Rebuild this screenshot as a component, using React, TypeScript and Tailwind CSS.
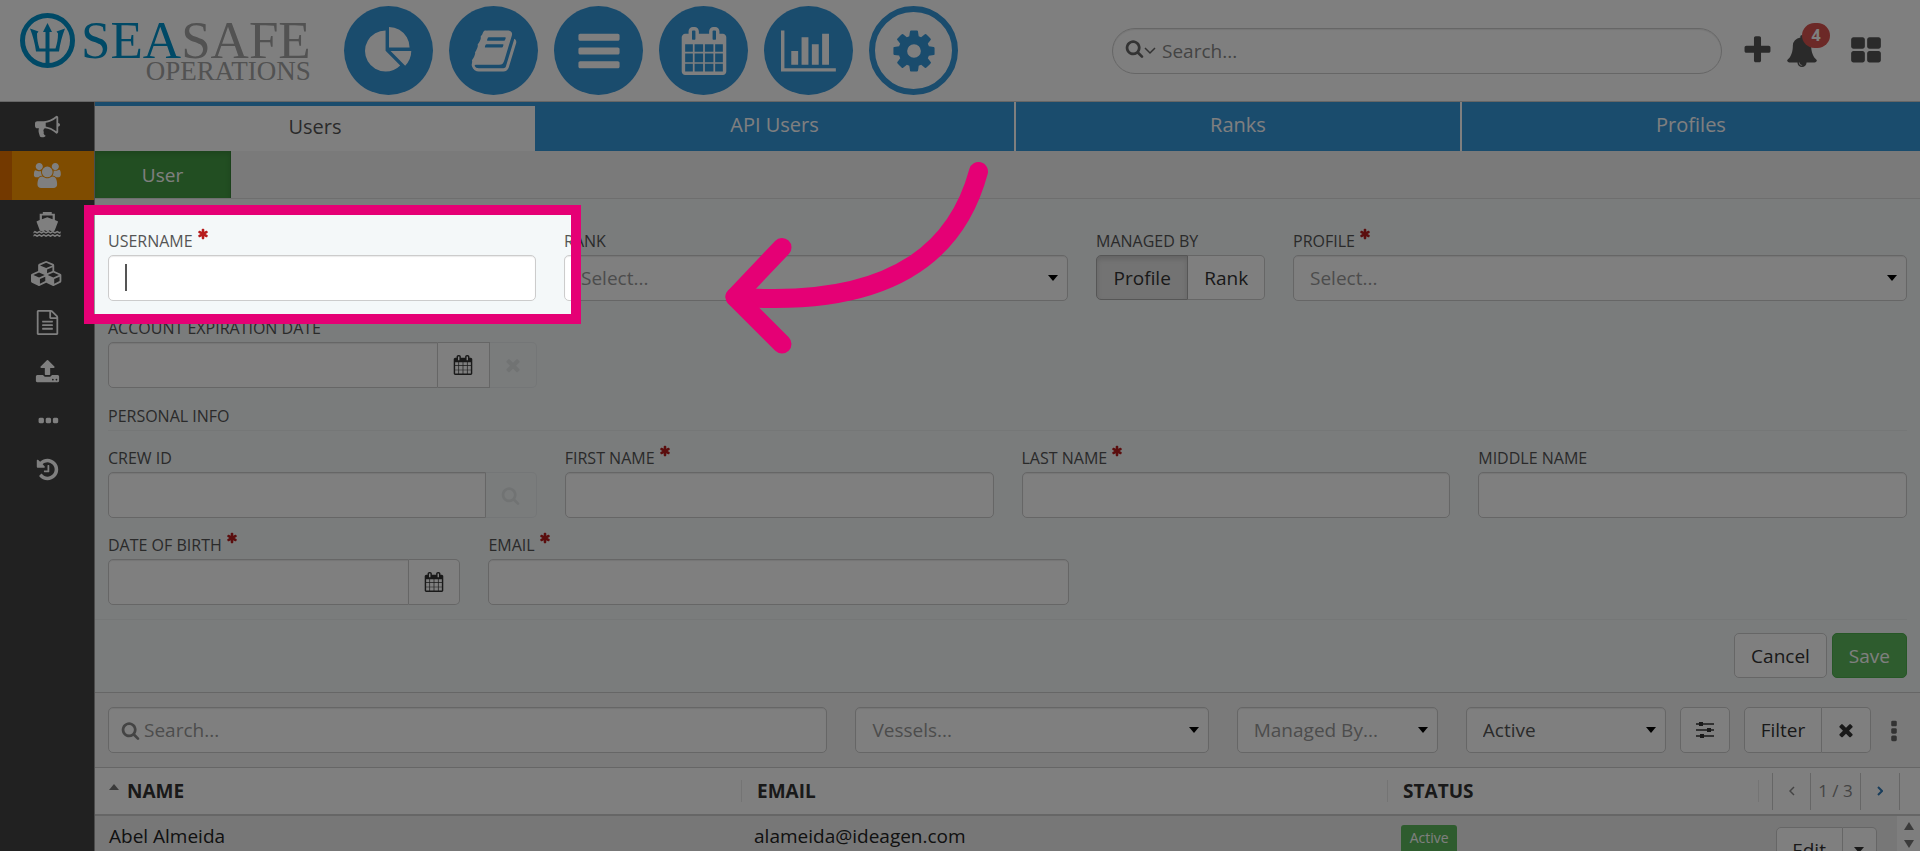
import type { ReactNode } from "react";

const icons = {
    asterisk: [1792, "M1546 1050q46 26 59.500 77.500t-12.500 97.500l-64 110q-26 46-77.500 59.500t-97.500-12.500l-266-153v307q0 52-38 90t-90 38h-128q-52 0-90-38t-38-90v-307l-266 153q-46 26-97.500 12.500t-77.500-59.500l-64-110q-26-46-12.500-97.500t59.500-77.500l266-154-266-154q-46-26-59.500-77.500t12.500-97.500l64-110q26-46 77.500-59.500t97.500 12.500l266 153v-307q0-52 38-90t90-38h128q52 0 90 38t38 90v307l266-153q46-26 97.500-12.500t77.500 59.500l64 110q26 46 12.500 97.500t-59.500 77.500l-266 154z"],
    pie: [1792, "M768 890l546 546q-106 108-247.5 168t-298.5 60q-209 0-385.5-103t-279.5-279.5-103-385.5 103-385.5 279.5-279.5 385.5-103v762zm187 6h773q0 157-60 298.5t-168 247.5zm709-128h-768v-768q209 0 385.5 103t279.5 279.5 103 385.5z"],
    book: [1792, "M1703 478q40 57 18 129l-275 906q-19 64-76.5 107.5t-122.5 43.5h-923q-77 0-148.5-53.5t-99.5-131.5q-24-67-2-127 0-4 3-27t4-37q1-8-3-21.5t-3-19.5q2-11 8-21t16.5-23.5 16.5-23.5q23-38 45-91.5t30-91.5q3-10 .5-30t-.5-28q3-11 17-28t17-23q21-36 42-92t25-90q1-9-2.5-32t.5-28q4-13 22-30.5t22-22.5q19-26 42.5-84.5t27.5-96.5q1-8-3-25.5t-2-26.5q2-8 9-18t18-23 17-21q8-12 16.5-30.5t15-35 16-36 19.5-32 26.5-23.5 36-11.5 47.5 5.5l-1 3q38-9 51-9h761q74 0 114 56t18 130l-274 906q-36 119-71.5 153.5t-128.5 34.5h-869q-27 0-38 15-11 16-1 43 24 70 144 70h923q29 0 56-15.5t35-41.5l300-987q7-22 5-57 38 15 59 43zm-1064 2q-4 13 2 22.5t20 9.5h608q13 0 25.5-9.5t16.5-22.5l21-64q4-13-2-22.5t-20-9.5h-608q-13 0-25.5 9.5t-16.5 22.5zm-83 256q-4 13 2 22.5t20 9.5h608q13 0 25.5-9.5t16.5-22.5l21-64q4-13-2-22.5t-20-9.5h-608q-13 0-25.5 9.5t-16.5 22.5z"],
    bars: [1792, "M1664 1344v128q0 26-19 45t-45 19h-1408q-26 0-45-19t-19-45v-128q0-26 19-45t45-19h1408q26 0 45 19t19 45zm0-512v128q0 26-19 45t-45 19h-1408q-26 0-45-19t-19-45v-128q0-26 19-45t45-19h1408q26 0 45 19t19 45zm0-512v128q0 26-19 45t-45 19h-1408q-26 0-45-19t-19-45v-128q0-26 19-45t45-19h1408q26 0 45 19t19 45z"],
    calendar: [1792, "M192 1664h288v-288h-288v288zm352 0h320v-288h-320v288zm-352-352h288v-320h-288v320zm352 0h320v-320h-320v320zm-352-384h288v-288h-288v288zm736 736h320v-288h-320v288zm-384-736h320v-288h-320v288zm768 736h288v-288h-288v288zm-384-352h320v-320h-320v320zm-352-864v-288q0-13-9.5-22.5t-22.5-9.5h-64q-13 0-22.5 9.5t-9.5 22.5v288q0 13 9.5 22.5t22.5 9.5h64q13 0 22.5-9.5t9.5-22.5zm736 864h288v-320h-288v320zm-384-384h320v-288h-320v288zm384 0h288v-288h-288v288zm32-480v-288q0-13-9.5-22.5t-22.5-9.5h-64q-13 0-22.5 9.5t-9.5 22.5v288q0 13 9.5 22.5t22.5 9.5h64q13 0 22.5-9.5t9.5-22.5zm384-64v1280q0 52-38 90t-90 38h-1408q-52 0-90-38t-38-90v-1280q0-52 38-90t90-38h128v-96q0-66 47-113t113-47h64q66 0 113 47t47 113v96h384v-96q0-66 47-113t113-47h64q66 0 113 47t47 113v96h128q52 0 90 38t38 90z"],
    chart: [2048, "M640 896v512h-256v-512h256zm384-512v1024h-256v-1024h256zm1024 1152v128h-2048v-1536h128v1408h1920zm-640-896v768h-256v-768h256zm384-384v1152h-256v-1152h256z"],
    cog: [1792, "M1152 896q0-106-75-181t-181-75-181 75-75 181 75 181 181 75 181-75 75-181zm512-109v222q0 12-8 23t-20 13l-185 28q-19 54-39 91 35 50 107 138 10 12 10 25t-9 23q-27 37-99 108t-94 71q-12 0-26-9l-138-108q-44 23-91 38-16 136-29 186-7 28-36 28h-222q-14 0-24.5-8.5t-11.5-21.5l-28-184q-49-16-90-37l-141 107q-10 9-25 9-14 0-25-11-126-114-165-168-7-10-7-23 0-12 8-23 15-21 51-66.5t54-70.5q-27-50-41-99l-183-27q-13-2-21-12.5t-8-23.5v-222q0-12 8-23t19-13l186-28q14-46 39-92-40-57-107-138-10-12-10-24 0-10 9-23 26-36 98.5-107.5t94.5-71.5q13 0 26 10l138 107q44-23 91-38 16-136 29-186 7-28 36-28h222q14 0 24.5 8.5t11.5 21.5l28 184q49 16 90 37l142-107q9-9 24-9 13 0 25 10 129 119 165 170 7 8 7 22 0 12-8 23-15 21-51 66.5t-54 70.5q26 50 41 98l183 28q13 2 21 12.5t8 23.5z"],
    search: [1792, "M1216 832q0-185-131.5-316.5t-316.5-131.5-316.5 131.5-131.5 316.5 131.5 316.5 316.5 131.5 316.5-131.5 131.5-316.5zm512 832q0 52-38 90t-90 38q-54 0-90-38l-343-342q-179 124-399 124-143 0-273.5-55.5t-225-150-150-225-55.5-273.5 55.5-273.5 150-225 225-150 273.5-55.5 273.5 55.5 225 150 150 225 55.5 273.5q0 220-124 399l343 343q37 37 37 90z"],
    plus: [1792, "M1600 736v192q0 40-28 68t-68 28h-416v416q0 40-28 68t-68 28h-192q-40 0-68-28t-28-68v-416h-416q-40 0-68-28t-28-68v-192q0-40 28-68t68-28h416v-416q0-40 28-68t68-28h192q40 0 68 28t28 68v416h416q40 0 68 28t28 68z"],
    bell: [1792, "M912 1696q0-16-16-16-59 0-101.5-42.5t-42.5-101.5q0-16-16-16t-16 16q0 73 51.5 124.5t124.5 51.5q16 0 16-16zm816-288q0 52-38 90t-90 38h-448q0 106-75 181t-181 75-181-75-75-181h-448q-52 0-90-38t-38-90q50-42 91-88t85-119.5 74.5-158.5 50-206 19.5-260q0-152 117-282.5t307-158.5q-8-19-8-39 0-40 28-68t68-28 68 28 28 68q0 20-8 39 190 28 307 158.5t117 282.5q0 139 19.5 260t50 206 74.5 158.5 85 119.5 91 88z"],
    grid: [1792, "M832 1024v384q0 52-38 90t-90 38h-512q-52 0-90-38t-38-90v-384q0-52 38-90t90-38h512q52 0 90 38t38 90zm0-768v384q0 52-38 90t-90 38h-512q-52 0-90-38t-38-90v-384q0-52 38-90t90-38h512q52 0 90 38t38 90zm896 768v384q0 52-38 90t-90 38h-512q-52 0-90-38t-38-90v-384q0-52 38-90t90-38h512q52 0 90 38t38 90zm0-768v384q0 52-38 90t-90 38h-512q-52 0-90-38t-38-90v-384q0-52 38-90t90-38h512q52 0 90 38t38 90z"],
    times: [1792, "M1490 1322q0 40-28 68l-136 136q-28 28-68 28t-68-28l-294-294-294 294q-28 28-68 28t-68-28l-136-136q-28-28-28-68t28-68l294-294-294-294q-28-28-28-68t28-68l136-136q28-28 68-28t68 28l294 294 294-294q28-28 68-28t68 28l136 136q28 28 28 68t-28 68l-294 294 294 294q28 28 28 68z"],
    bullhorn: [1792, "M1664 640q53 0 90.5 37.5t37.5 90.5-37.5 90.5-90.5 37.5v384q0 52-38 90t-90 38q-417-347-812-380-58 19-91 66t-31 100.5 40 92.5q-20 33-23 65.5t6 58 33.5 55 48 50 61.5 50.5q-29 58-111.5 83t-168.5 11.5-132-55.5q-7-23-29.5-87.5t-32-94.5-23-89-15-101 3.5-98.5 22-110.5h-122q-66 0-113-47t-47-113v-192q0-66 47-113t113-47h480q435 0 896-384 52 0 90 38t38 90v384zm-128 604v-954q-394 302-768 343v270q377 42 768 341z"],
    users: [2048, "M657 896q-162 5-265 128h-134q-82 0-138-40.5t-56-118.5q0-353 124-353 6 0 43.5 21t97.5 42.5 119 21.5q67 0 133-23-5 37-5 66 0 159 92 293zm1071 637q0 120-73 189.5t-194 69.5h-874q-121 0-194-69.5t-73-189.5q0-53 3.5-103.5t14-109 26.5-108.5 43-97.5 62-81 85.5-53.5 111.5-20q10 0 43 21.5t73 48 107 48 135 21.5 135-21.5 107-48 73-48 43-21.5q61 0 111.5 20t85.5 53.5 62 81 43 97.5 26.5 108.5 14 109 3.5 103.5zm-1024-1277q0 106-75 181t-181 75-181-75-75-181 75-181 181-75 181 75 75 181zm704 384q0 159-112.5 271.5t-271.5 112.5-271.5-112.5-112.5-271.5 112.5-271.5 271.5-112.5 271.5 112.5 112.5 271.5zm576 225q0 78-56 118.5t-138 40.5h-134q-103-123-265-128 92-134 92-293 0-29-5-66 66 23 133 23 59 0 119-21.5t97.5-42.5 43.5-21q124 0 124 353zm-128-609q0 106-75 181t-181 75-181-75-75-181 75-181 181-75 181 75 75 181z"],
    ship: [2048, "M704 0h640v128h224v448l200 80q40 20 20 64l-230 600q-90 60-180 60t-190-70q-80 70-164 70t-164-70q-100 70-190 70t-180-60l-230-600q-20-44 20-64l200-80v-448h224zm-64 256v270l384-154 384 154v-270zm-606 1170l100-80 160 90 160-90 160 90 160-90 160 90 160-90 160 90 160-90 160 90 160-90 160 90 90-50v130l-90 50-160-90-160 90-160-90-160 90-160-90-160 90-160-90-160 90-160-90-160 90-160-90-100 70zm0 230l100-80 160 90 160-90 160 90 160-90 160 90 160-90 160 90 160-90 160 90 160-90 160 90 90-50v130l-90 50-160-90-160 90-160-90-160 90-160-90-160 90-160-90-160 90-160-90-160 90-160-90-100 70z"],
    cubes: [2304, "M640 1632l384-192v-314l-384 164v342zm-64-454l404-173-404-173-404 173zm1088 454l384-192v-314l-384 164v342zm-64-454l404-173-404-173-404 173zm-448-293l384-165v-266l-384 164v267zm-64-379l441-189-441-189-441 189zm1088 518v416q0 36-19 67t-52 47l-448 224q-25 14-57 14t-57-14l-448-224q-4-2-7-4-2 2-7 4l-448 224q-25 14-57 14t-57-14l-448-224q-33-16-52-47t-19-67v-416q0-38 21.5-70t56.5-48l434-186v-400q0-38 21.5-70t56.5-48l448-192q23-10 50-10t50 10l448 192q35 16 56.5 48t21.5 70v400l434 186q36 16 57 48t21 70z"],
    file: [1792, "M1596 380q28 28 48 76t20 88v1152q0 40-28 68t-68 28h-1344q-40 0-68-28t-28-68v-1600q0-40 28-68t68-28h896q40 0 88 20t76 48zm-444-244v376h376q-10-29-22-41l-313-313q-12-12-41-22zm384 1528v-1024h-416q-40 0-68-28t-28-68v-416h-768v1536h1280zm-1024-864q0-14 9-23t23-9h704q14 0 23 9t9 23v64q0 14-9 23t-23 9h-704q-14 0-23-9t-9-23v-64zm736 224q14 0 23 9t9 23v64q0 14-9 23t-23 9h-704q-14 0-23-9t-9-23v-64q0-14 9-23t23-9h704zm0 256q14 0 23 9t9 23v64q0 14-9 23t-23 9h-704q-14 0-23-9t-9-23v-64q0-14 9-23t23-9h704z"],
    upload: [1792, "M1344 1472q0-26-19-45t-45-19-45 19-19 45 19 45 45 19 45-19 19-45zm256 0q0-26-19-45t-45-19-45 19-19 45 19 45 45 19 45-19 19-45zm128-224v320q0 40-28 68t-68 28h-1472q-40 0-68-28t-28-68v-320q0-40 28-68t68-28h427q21 56 70.5 92t110.5 36h256q61 0 110.5-36t70.5-92h427q40 0 68 28t28 68zm-325-648q-17 40-59 40h-256v448q0 26-19 45t-45 19h-256q-26 0-45-19t-19-45v-448h-256q-42 0-59-40-17-39 14-69l448-448q18-19 45-19t45 19l448 448q31 30 14 69z"],
    dots: [1792, "M640 800v192q0 40-28 68t-68 28h-192q-40 0-68-28t-28-68v-192q0-40 28-68t68-28h192q40 0 68 28t28 68zm512 0v192q0 40-28 68t-68 28h-192q-40 0-68-28t-28-68v-192q0-40 28-68t68-28h192q40 0 68 28t28 68zm512 0v192q0 40-28 68t-68 28h-192q-40 0-68-28t-28-68v-192q0-40 28-68t68-28h192q40 0 68 28t28 68z"],
    history: [1792, "M1664 896q0 156-61 298t-164 245-245 164-298 61q-172 0-327-72.5t-264-204.5q-7-10-6.5-22.5t8.5-20.5l137-138q10-9 25-9 16 2 23 12 73 95 179 147t225 52q104 0 198.5-40.5t163.5-109.5 109.5-163.5 40.5-198.5-40.5-198.5-109.5-163.5-163.5-109.5-198.5-40.5q-98 0-188 35.5t-160 101.5l137 138q31 30 14 69-17 40-59 40h-448q-26 0-45-19t-19-45v-448q0-42 40-59 39-17 69 14l130 129q107-101 244.5-156.5t284.5-55.5q156 0 298 61t245 164 164 245 61 298zm-640-288v448q0 14-9 23t-23 9h-320q-14 0-23-9t-9-23v-64q0-14 9-23t23-9h224v-352q0-14 9-23t23-9h64q14 0 23 9t9 23z"],
} as const;

type IconName = keyof typeof icons;

function Icon({ name, className }: { name: IconName; className: string }) {
    const [width, path] = icons[name];
    return (
        <svg viewBox={`0 0 ${width} 1792`} className={`shrink-0 fill-current ${className}`} aria-hidden="true">
            <path d={path} />
        </svg>
    );
}

const control = "w-full min-w-0 h-[46px] px-4 bg-white border border-[#ccc] rounded-[5px] shadow-[inset_0_1px_1px_rgba(0,0,0,0.08)] outline-none placeholder:text-[#999]";
const button = "flex items-center justify-center h-[46px] bg-white border border-[#ccc] text-[#333]";

function Label({ htmlFor, required, children }: { htmlFor: string; required?: boolean; children: ReactNode }) {
    return (
        <label htmlFor={htmlFor} className="flex items-start gap-1 mb-px text-base leading-[26px] whitespace-nowrap">
            {children}
            {required && <Icon name="asterisk" className="size-3 text-[#b71c1c]" />}
        </label>
    );
}

function TextField({ id, label, required }: { id: string; label: string; required?: boolean }) {
    return (
        <div>
            <Label htmlFor={id} required={required}>{label}</Label>
            <input id={id} type="text" className={control} />
        </div>
    );
}

function Select({ id, text, dark, label }: { id: string; text: string; dark?: boolean; label?: string }) {
    return (
        <div className="relative">
            <select id={id} aria-label={label} className={`${control} appearance-none ${dark ? "text-[#555]" : "text-[#999]"}`}>
                <option>{text}</option>
            </select>
            <svg viewBox="0 0 10 6" className="absolute right-2.5 top-5 w-2.5 h-1.5 fill-black pointer-events-none">
                <path d="M0 0h10L5 6z" />
            </svg>
        </div>
    );
}

function Logo() {
    return (
        <a href="#home" className="flex items-start gap-1.5 w-[325px] pl-5 pt-[13px] shrink-0 text-[#0093cc]">
            <svg viewBox="0 0 55 55" className="size-[55px] shrink-0" fill="none" stroke="currentColor">
                <circle cx="27.500" cy="27.500" r="25" strokeWidth="5" />
                <path d="M27.500 17v34" strokeWidth="4" />
                <path d="M27.500 10l-4.500 9h9z" fill="currentColor" stroke="none" />
                <path d="M10 15.500l8.500 3-1.500 2c0 6 1 10 2.500 15h16c1.500-5 2.500-9 2.500-15l-1.500-2 8.500-3c-3 8-5 15-6 23h-23c-1-8-3-15-6-23z" fill="currentColor" stroke="none" />
            </svg>
            <span className="flex flex-col items-end pt-1.5 font-['Liberation_Serif',serif] text-[#a4a4a4]">
                <span className="text-[53px] leading-[42px]">
                    <span className="text-[#0093cc]">SEA</span>SAFE
                </span>
                <span className="text-[27px] leading-5">OPERATIONS</span>
            </span>
        </a>
    );
}

const modules: { icon: IconName; label: string }[] = [
    { icon: "pie", label: "Dashboard" },
    { icon: "book", label: "Manuals" },
    { icon: "bars", label: "Lists" },
    { icon: "calendar", label: "Calendar" },
    { icon: "chart", label: "Reports" },
];

function Header() {
    return (
        <header className="flex h-[102px] bg-white border-b border-[#ccc] text-[#666]">
            <Logo />
            <nav className="flex items-center gap-4 ml-[19px] shrink-0">
                {modules.map((m) => (
                    <button key={m.icon} aria-label={m.label} className="flex items-center justify-center size-[89px] rounded-full bg-[#3598db] text-white">
                        <Icon name={m.icon} className="h-12" />
                    </button>
                ))}
                <button aria-label="Settings" className="flex items-center justify-center size-[89px] rounded-full border-6 border-[#3598db] text-[#3598db]">
                    <Icon name="cog" className="h-12" />
                </button>
            </nav>
            <div className="flex flex-1 items-center justify-end pr-[38px]">
                <div className="flex items-center w-[610px] h-[46px] px-3 border border-[#ccc] rounded-full shadow-[inset_0_1px_1px_rgba(0,0,0,0.08)]">
                    <Icon name="search" className="h-[19px] -mt-1" />
                    <svg viewBox="0 0 12 8" className="w-3 h-2 shrink-0" fill="none" stroke="currentColor" strokeWidth="1.500">
                        <path d="M1 1l5 5 5-5" />
                    </svg>
                    <input type="search" aria-label="Search" placeholder="Search..." className="w-full ml-1.5 outline-none placeholder:text-[#888]" />
                </div>
                <button aria-label="Add" className="ml-[19px] text-[#555]">
                    <Icon name="plus" className="h-[33px]" />
                </button>
                <button aria-label="Notifications" className="relative ml-3 text-[#555]">
                    <Icon name="bell" className="h-8" />
                    <span className="absolute left-4 -top-3 flex items-center justify-center w-7 h-[25px] rounded-full bg-[#d9534f] text-white text-base font-bold">4</span>
                </button>
                <button aria-label="Apps" className="ml-8 text-[#555]">
                    <Icon name="grid" className="h-8" />
                </button>
            </div>
        </header>
    );
}

const menu: { icon: IconName; label: string }[] = [
    { icon: "bullhorn", label: "Announcements" },
    { icon: "users", label: "Users" },
    { icon: "ship", label: "Vessels" },
    { icon: "cubes", label: "Inventory" },
    { icon: "file", label: "Documents" },
    { icon: "upload", label: "Upload" },
    { icon: "dots", label: "More" },
    { icon: "history", label: "History" },
];

function Sidebar() {
    return (
        <nav className="flex flex-col w-[95px] shrink-0 bg-[#424242] text-white border-r border-[#999]">
            {menu.map((m) => (
                <a
                    key={m.icon}
                    href={`#${m.icon}`}
                    aria-label={m.label}
                    className={`flex items-center justify-center h-[49px] ${m.icon === "users" ? "bg-[#ff9800] border-l-12 border-[#e67300] pr-3" : ""}`}
                >
                    <Icon name={m.icon} className="h-[25px]" />
                </a>
            ))}
        </nav>
    );
}

function Tabs() {
    const tab = "flex items-start justify-center h-[49px] pt-[9px] text-xl leading-7 text-white";
    return (
        <nav className="grid grid-cols-[440fr_479fr_446fr_460fr] bg-[#3598db]">
            <a href="#users" className="flex items-start justify-center h-[49px] pt-[7px] bg-white border-t-4 border-[#3598db] text-xl leading-7 text-[#555]">Users</a>
            <a href="#api-users" className={tab}>API Users</a>
            <a href="#ranks" className={`${tab} border-l-2 border-white`}>Ranks</a>
            <a href="#profiles" className={`${tab} border-l-2 border-white`}>Profiles</a>
        </nav>
    );
}

function UserForm() {
    return (
        <form className="bg-[#f4f8f9] text-[#555] border-b border-[#ccc]">
            <div className="flex flex-col gap-3.5 px-[13px] pt-[29px] pb-3.5">
                <div className="grid grid-cols-[428fr_504fr_169fr_614fr] gap-7">
                    <div className="relative">
                        <TextField id="username" label="USERNAME" required />
                        <span className="absolute left-[17px] bottom-2.5 w-0.5 h-[27px] bg-[#555]"></span>
                    </div>
                    <div>
                        <Label htmlFor="rank">RANK</Label>
                        <Select id="rank" text="Select..." />
                    </div>
                    <div>
                        <Label htmlFor="managed-profile">MANAGED BY</Label>
                        <div className="flex">
                            <button id="managed-profile" type="button" className="flex-[92] h-[45px] bg-[#e6e6e6] border border-[#adadad] rounded-l-[5px] text-[#333] shadow-[inset_0_3px_5px_rgba(0,0,0,0.13)]">Profile</button>
                            <button type="button" className="flex-[77] h-[45px] bg-white border border-l-0 border-[#ccc] rounded-r-[5px] text-[#333]">Rank</button>
                        </div>
                    </div>
                    <div>
                        <Label htmlFor="profile" required>PROFILE</Label>
                        <Select id="profile" text="Select..." />
                    </div>
                </div>
                <div className="grid grid-cols-4 gap-7">
                    <div>
                        <Label htmlFor="expiration">ACCOUNT EXPIRATION DATE</Label>
                        <div className="flex">
                            <input id="expiration" type="text" className={`${control} rounded-r-none`} />
                            <button type="button" aria-label="Pick date" className={`${button} w-[52px] shrink-0 border-l-0`}>
                                <Icon name="calendar" className="h-5" />
                            </button>
                            <button type="button" disabled aria-label="Clear date" className="flex items-center justify-center h-[46px] w-[47px] shrink-0 border border-l-0 border-[#e9edee] rounded-r-[5px] text-[#e2e6e7]">
                                <Icon name="times" className="h-5" />
                            </button>
                        </div>
                    </div>
                </div>
                <h2 className="text-base leading-7 border-b border-[#eaeeef]">PERSONAL INFO</h2>
                <div className="grid grid-cols-4 gap-7">
                    <div>
                        <Label htmlFor="crew-id">CREW ID</Label>
                        <div className="flex">
                            <input id="crew-id" type="text" className={`${control} rounded-r-none`} />
                            <button type="button" disabled aria-label="Find crew" className="flex items-center justify-center h-[46px] w-[51px] shrink-0 border border-l-0 border-[#e9edee] rounded-r-[5px] text-[#e2e6e7]">
                                <Icon name="search" className="h-[19px]" />
                            </button>
                        </div>
                    </div>
                    <TextField id="first-name" label="FIRST NAME" required />
                    <TextField id="last-name" label="LAST NAME" required />
                    <TextField id="middle-name" label="MIDDLE NAME" />
                </div>
                <div className="grid grid-cols-[352fr_580fr_809fr] gap-7">
                    <div>
                        <Label htmlFor="birth" required>DATE OF BIRTH</Label>
                        <div className="flex">
                            <input id="birth" type="text" className={`${control} rounded-r-none`} />
                            <button type="button" aria-label="Pick date of birth" className={`${button} w-[51px] shrink-0 border-l-0 rounded-r-[5px]`}>
                                <Icon name="calendar" className="h-5" />
                            </button>
                        </div>
                    </div>
                    <TextField id="email" label="EMAIL" required />
                </div>
            </div>
            <div className="flex justify-end gap-[5px] mr-[13px] pt-[13px] pb-3.5 border-t border-[#eaeeef]">
                <button type="button" className="h-[45px] px-4 rounded-[5px] border border-[#ccc] bg-white text-[#333]">Cancel</button>
                <button type="submit" className="h-[45px] px-4 rounded-[5px] border border-[#4cae4c] bg-[#5cb85c] text-white">Save</button>
            </div>
        </form>
    );
}

function FilterBar() {
    return (
        <div className="flex items-center px-[13px] py-3.5 bg-[#f5f5f5] border-b border-[#ccc]">
            <div className="grid grid-cols-[719fr_353fr_201fr_200fr] gap-7 flex-1">
                <div className={`${control} flex items-center gap-1 px-3! text-[#888]`}>
                    <Icon name="search" className="h-[19px]" />
                    <input type="search" aria-label="Search users" placeholder="Search..." className="w-full outline-none placeholder:text-[#999]" />
                </div>
                <Select id="vessels" label="Vessels" text="Vessels..." />
                <Select id="managed-by" label="Managed by" text="Managed By..." />
                <Select id="status" label="Status" text="Active" dark />
            </div>
            <button aria-label="Options" className={`${button} w-[50px] ml-3.5 rounded-[5px]`}>
                <svg viewBox="0 0 18 16" className="w-[18px] h-4" stroke="currentColor" strokeWidth="1.500">
                    <path d="M0 2h18M0 8h18M0 14h18" />
                    <path d="M5 0v4M13 6v4M6 12v4" strokeWidth="4" />
                </svg>
            </button>
            <div className="flex ml-3.5">
                <button className={`${button} w-[78px] rounded-l-[5px]`}>Filter</button>
                <button aria-label="Clear filter" className={`${button} w-[49px] border-l-0 rounded-r-[5px]`}>
                    <Icon name="times" className="h-5" />
                </button>
            </div>
            <button aria-label="More" className="ml-2.5 text-[#666]">
                <Icon name="dots" className="h-[26px] rotate-90" />
            </button>
        </div>
    );
}

function UserTable() {
    const divider = "border-l border-[#e8e8e8] h-[22px] leading-[22px] pl-[15px]";
    return (
        <div className="relative flex-1 bg-[#eee] text-[#222]">
            <table className="w-full table-fixed text-left">
                <thead className="bg-white border-b-2 border-[#ccc] text-[#333]">
                    <tr className="h-[47px]">
                        <th className="w-[35.4%] pl-3.5">
                            <span className="flex items-center gap-2">
                                <svg viewBox="0 0 10 6" className="w-2.5 h-1.5 -mt-2 fill-[#777]"><path d="M5 0l5 6H0z" /></svg>
                                NAME
                            </span>
                        </th>
                        <th className="w-[35.4%]"><div className={divider}>EMAIL</div></th>
                        <th className="w-[20.300%]"><div className={divider}>STATUS</div></th>
                        <th className="font-normal">
                            <div className="flex items-center justify-between pr-5">
                                <span className="h-[22px] border-l border-[#e8e8e8]"></span>
                                <div className="flex h-[37px] border-x border-[#ccc] text-[17px] text-[#888]">
                                    <button aria-label="Previous page" className="flex items-center justify-center w-[37px]">
                                        <svg viewBox="0 0 6 10" className="w-1.5 h-2.5" fill="none" stroke="currentColor" strokeWidth="1.500"><path d="M5 1L1 5l4 4" /></svg>
                                    </button>
                                    <span className="flex items-center justify-center w-[51px] border-x border-[#ccc]">1 / 3</span>
                                    <button aria-label="Next page" className="flex items-center justify-center w-[38px] text-[#337ab7]">
                                        <svg viewBox="0 0 6 10" className="w-1.5 h-2.5" fill="none" stroke="currentColor" strokeWidth="2"><path d="M1 1l4 4-4 4" /></svg>
                                    </button>
                                </div>
                            </div>
                        </th>
                    </tr>
                </thead>
                <tbody>
                    <tr className="align-top">
                        <td className="pl-3.5 pt-1.5">Abel Almeida</td>
                        <td className="pl-[13px] pt-1.5">alameida@ideagen.com</td>
                        <td className="pl-3.5 pt-[9px]">
                            <span className="block w-14 h-7 rounded-[3px] bg-[#5cb85c] text-white text-sm leading-[26px] text-center">Active</span>
                        </td>
                        <td className="pt-[11px]">
                            <div className="flex pl-[18px]">
                                <button className={`${button} w-[67px] rounded-l-[5px]`}>Edit</button>
                                <button aria-label="More actions" className={`${button} w-[34px] border-l-0 rounded-r-[5px]`}>
                                    <svg viewBox="0 0 10 6" className="w-2.5 h-1.5 fill-current"><path d="M0 0h10L5 6z" /></svg>
                                </button>
                            </div>
                        </td>
                    </tr>
                </tbody>
            </table>
            <div className="absolute right-0 top-12 bottom-0 flex flex-col items-center gap-2.5 w-[23px] pt-1.5 bg-[#fcfcfc]">
                <svg viewBox="0 0 10 8" className="w-2.5 h-2 fill-[#777]"><path d="M5 0l5 8H0z" /></svg>
                <svg viewBox="0 0 10 8" className="w-2.5 h-2 fill-[#777]"><path d="M0 0h10L5 8z" /></svg>
            </div>
        </div>
    );
}

// Dims the page and leaves only the username field lit
function Spotlight() {
    return (
        <div className="absolute inset-0 overflow-hidden pointer-events-none">
            <div className="absolute left-[84px] top-[205px] w-[497px] h-[119px] border-10 border-[#e50075] shadow-[0_0_0_3000px_rgba(0,0,0,0.5)]"></div>
            <svg viewBox="0 0 270 200" className="absolute left-[720px] top-[158px] w-[270px] h-[200px]" fill="none" stroke="#e50075" strokeWidth="19" strokeLinecap="round" strokeLinejoin="round">
                <path d="M258.500 13.500C240 82 185 152 15 139" />
                <path d="M62 89.500L15 139l47 47" />
            </svg>
        </div>
    );
}

export default function App() {
    return (
        <div className="relative flex flex-col h-screen overflow-hidden font-['Open_Sans','Noto_Sans',sans-serif] text-[19px] leading-7">
            <Header />
            <div className="flex flex-1 min-h-0">
                <Sidebar />
                <main className="flex flex-col flex-1 min-w-0">
                    <Tabs />
                    <div className="flex bg-[#f5f5f5] border-b border-[#ddd]">
                        <button className="w-[136px] h-[47px] bg-[#449d44] text-white border-r border-[#398439] shadow-[inset_0_3px_5px_rgba(0,0,0,0.13)]">User</button>
                    </div>
                    <UserForm />
                    <FilterBar />
                    <UserTable />
                </main>
            </div>
            <Spotlight />
        </div>
    );
}
